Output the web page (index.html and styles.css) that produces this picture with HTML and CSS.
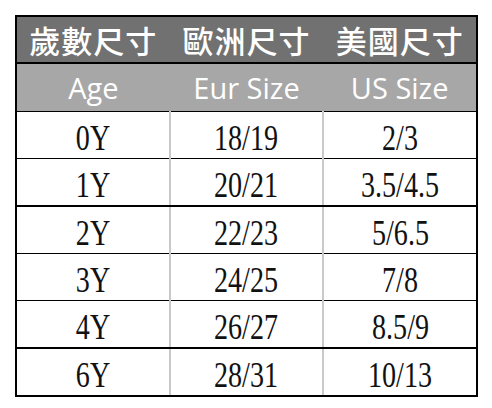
FILE: index.html
```html
<!DOCTYPE html>
<html lang="zh-Hant">
<head>
<meta charset="utf-8">
<link rel="stylesheet" href="styles.css">
</head>
<body>
<table class="size-table">
  <thead>
    <tr class="head-zh">
      <th>歲數尺寸</th><th>歐洲尺寸</th><th>美國尺寸</th>
    </tr>
    <tr class="head-en">
      <th>Age</th><th>Eur Size</th><th>US Size</th>
    </tr>
  </thead>
  <tbody>
    <tr class="r"><td><span>0Y</span></td><td><span>18/19</span></td><td><span>2/3</span></td></tr>
    <tr class="r thick"><td><span>1Y</span></td><td><span>20/21</span></td><td><span>3.5/4.5</span></td></tr>
    <tr class="r"><td><span>2Y</span></td><td><span>22/23</span></td><td><span>5/6.5</span></td></tr>
    <tr class="r"><td><span>3Y</span></td><td><span>24/25</span></td><td><span>7/8</span></td></tr>
    <tr class="r thick"><td><span>4Y</span></td><td><span>26/27</span></td><td><span>8.5/9</span></td></tr>
    <tr class="r last"><td><span>6Y</span></td><td><span>28/31</span></td><td><span>10/13</span></td></tr>
  </tbody>
</table>
</body>
</html>
```
FILE: styles.css
```css
html, body {
  margin: 0;
  padding: 0;
  background: #ffffff;
}
body {
  padding: 15px 0 0 15px;
}
.size-table {
  border-collapse: collapse;
  width: 463px;
  table-layout: fixed;
  border: 2px solid #000;
}
.size-table th,
.size-table td {
  padding: 0;
  text-align: center;
  vertical-align: middle;
  border-left: 2px solid #c9c9c9;
  border-right: 2px solid #c9c9c9;
}
.size-table th:first-child,
.size-table td:first-child {
  border-left: 2px solid #000;
}
.size-table th:last-child,
.size-table td:last-child {
  border-right: 2px solid #000;
}
.head-zh th {
  height: 45px;
  background: #717171;
  color: #ffffff;
  font-family: "Noto Sans CJK TC", "Noto Sans CJK SC", sans-serif;
  font-weight: 500;
  font-size: 31px;
  letter-spacing: 1px;
  line-height: 1;
  border-left: none;
  border-right: none;
  border-bottom: 2px solid #000;
}
.head-en th {
  height: 47px;
  background: #a7a7a7;
  color: #ffffff;
  font-family: "Open Sans", sans-serif;
  font-weight: 400;
  font-size: 29px;
  line-height: 1;
  border-left: none;
  border-right: none;
  border-bottom: 1px solid #000;
}
.head-zh th:first-child, .head-en th:first-child { border-left: 2px solid #000; }
.head-zh th:last-child, .head-en th:last-child { border-right: 2px solid #000; }
.r td {
  height: 46px;
  font-family: "Liberation Serif", "Times New Roman", serif;
  font-size: 36px;
  line-height: 1;
  color: #111;
  border-bottom: 1px solid #000;
}
.r td span {
  display: inline-block;
  transform: scaleX(0.78);
  padding-top: 6px;
}
.r.thick td {
  border-bottom: 2px solid #000;
}
.r.last td {
  border-bottom: 2px solid #000;
}
```
